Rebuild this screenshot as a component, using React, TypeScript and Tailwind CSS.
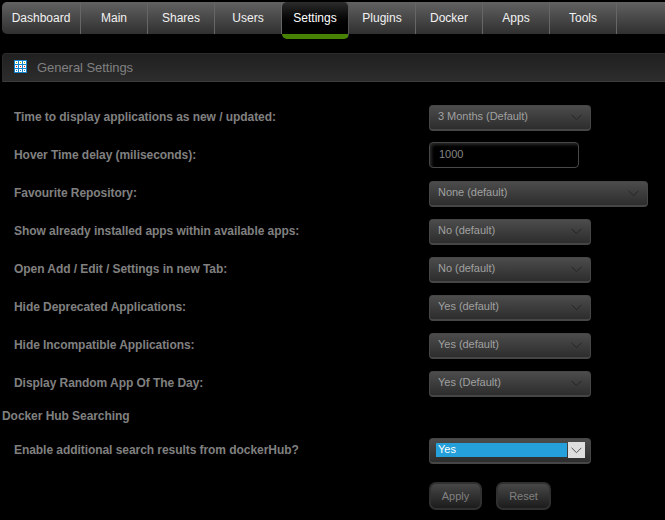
import React from "react";
import clsx from "clsx";

interface SelectSetting {
  label: string;
  value: string;
  kind?: "select" | "input";
  wide?: boolean;
}

const TABS = [
  "Dashboard",
  "Main",
  "Shares",
  "Users",
  "Settings",
  "Plugins",
  "Docker",
  "Apps",
  "Tools",
];

const SETTINGS: SelectSetting[] = [
  { label: "Time to display applications as new / updated:", value: "3 Months (Default)" },
  { label: "Hover Time delay (miliseconds):", value: "1000", kind: "input" },
  { label: "Favourite Repository:", value: "None (default)", wide: true },
  { label: "Show already installed apps within available apps:", value: "No (default)" },
  { label: "Open Add / Edit / Settings in new Tab:", value: "No (default)" },
  { label: "Hide Deprecated Applications:", value: "Yes (default)" },
  { label: "Hide Incompatible Applications:", value: "Yes (default)" },
  { label: "Display Random App Of The Day:", value: "Yes (Default)" },
];

function Chevron({ className }: { className?: string }) {
  return (
    <svg
      width="11"
      height="7"
      viewBox="0 0 11 7"
      fill="none"
      stroke="currentColor"
      strokeWidth="1"
      className={className}
    >
      <path d="M0.6 0.8 5.5 5.7 10.4 0.8" />
    </svg>
  );
}

function GridIcon() {
  const dots = ["#7cb800", "#d81010", "#0b7fcb"];
  return (
    <svg width="13" height="13" viewBox="0 0 13 13" shapeRendering="crispEdges">
      <rect width="13" height="13" fill="#1484cc" />
      {dots.map((color, row) =>
        [0, 1, 2].map((col) => (
          <g key={`${row}-${col}`}>
            <rect x={1 + col * 4} y={1 + row * 4} width="3" height="3" fill="#fff" />
            <rect x={2 + col * 4} y={2 + row * 4} width="1" height="1" fill={color} />
          </g>
        ))
      )}
    </svg>
  );
}

function NavBar() {
  return (
    <nav className="ml-[2px] flex h-8 rounded-l-[5px] bg-linear-to-b from-[#626262] to-[#303030] text-xs text-[#f2f2f2]">
      {TABS.map((tab) => {
        const active = tab === "Settings";
        return (
          <a
            key={tab}
            className={clsx(
              "flex justify-center border-r border-[#666] pt-2 leading-4",
              tab === "Dashboard" ? "w-[79px]" : "w-[67px]",
              active &&
                "h-[37px] rounded-[5px] border-b-5 border-r-[#555] border-b-[#488204] bg-linear-to-b from-[#2c2c2c] to-black to-90% text-white"
            )}
          >
            {tab}
          </a>
        );
      })}
    </nav>
  );
}

function SelectBox({ value, wide }: { value: string; wide?: boolean }) {
  return (
    <div
      className={clsx(
        "flex h-[26px] items-start justify-between rounded-[4px] border border-b-2 border-[#464646] bg-linear-to-b from-[#4c4c4c] to-[#2d2d2d] pr-2 pl-2 text-[11px] leading-[21px] tracking-[-0.03px] text-[#a0a0a0]",
        wide ? "w-[219px]" : "w-[162px]"
      )}
    >
      <span>{value}</span>
      <Chevron className="mt-2 text-[#262626]" />
    </div>
  );
}

function FocusedSelect({ value }: { value: string }) {
  return (
    <div className="flex h-[26px] w-[162px] items-start rounded-[4px] border border-b-2 border-[#464646] bg-linear-to-b from-[#4c4c4c] to-[#2d2d2d] pt-[3px] pl-[6px] text-[11px] text-white">
      <span className="mt-px h-[14px] w-[131px] bg-[#26a0da] pl-[2px] leading-[13px]">{value}</span>
      <span className="ml-px flex h-4 w-[17px] items-center justify-center bg-[#dedede]">
        <Chevron className="text-[#555]" />
      </span>
    </div>
  );
}

function TextInput({ value }: { value: string }) {
  return (
    <div className="-mt-px h-[26px] w-[150px] rounded-[4px] border border-[#484848] bg-black pl-[9px] text-[11px] leading-[23px] text-[#858585] shadow-[inset_2px_2px_3px_#262626]">
      {value}
    </div>
  );
}

function SettingRow({ label, children }: { label: string; children: React.ReactNode }) {
  return (
    <div className="flex h-[38px] pt-[6px] pl-[14px]">
      <div className="w-[415px] text-xs leading-6 font-bold tracking-[-0.056px]">{label}</div>
      {children}
    </div>
  );
}

function FormButton({ label, className }: { label: string; className: string }) {
  return (
    <button
      className={clsx(
        "h-7 rounded-[7px] border-2 border-[#303030] bg-linear-to-b from-[#484848] to-[#1c1c1c] text-[11px] leading-6 text-[#808080]",
        className
      )}
    >
      {label}
    </button>
  );
}

export default function App() {
  return (
    <div className="h-[520px] w-[665px] overflow-hidden bg-black pt-[2px] font-['Liberation_Sans',Arial,sans-serif] text-[#808080]">
      <NavBar />

      {/* Section title */}
      <div className="mt-[19px] ml-[2px] flex h-[29px] items-center rounded-tl-[4px] border-y border-l border-t-[#2b2b2b] border-b-[#3c3c3c] border-l-[#2b2b2b] bg-linear-to-b from-[#202020] to-[#2d2d2d] pl-[11px]">
        <div className="-mt-[2px]">
          <GridIcon />
        </div>
        <h1 className="ml-[10px] text-[13px] leading-4 tracking-[-0.05px]">General Settings</h1>
      </div>

      <div className="mt-[17px]">
        {SETTINGS.map((setting) => (
          <SettingRow key={setting.label} label={setting.label}>
            {setting.kind === "input" ? (
              <TextInput value={setting.value} />
            ) : (
              <SelectBox value={setting.value} wide={setting.wide} />
            )}
          </SettingRow>
        ))}
      </div>

      <h2 className="mt-[5px] h-6 pl-[2px] text-xs leading-4 font-bold tracking-[-0.056px]">
        Docker Hub Searching
      </h2>

      <SettingRow label="Enable additional search results from dockerHub?">
        <FocusedSelect value="Yes" />
      </SettingRow>

      <div className="mt-3 flex gap-[14px] pl-[429px]">
        <FormButton label="Apply" className="w-[53px]" />
        <FormButton label="Reset" className="w-[55px]" />
      </div>
    </div>
  );
}
